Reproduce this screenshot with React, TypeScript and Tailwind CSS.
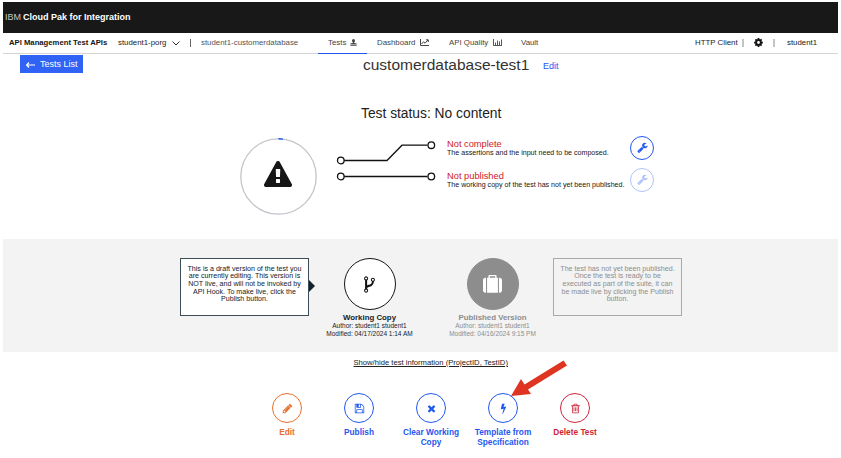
import type { ReactNode } from "react";

const paths = {
  warning:
    "M1024 1375v-190q0-14-9.5-23.5t-22.5-9.5h-192q-13 0-22.5 9.5t-9.5 23.5v190q0 14 9.5 23.5t22.5 9.5h192q13 0 22.5-9.5t9.5-23.5zm-2-374l18-459q0-12-10-19-13-11-24-11h-220q-11 0-24 11-10 7-10 21l17 457q0 10 10 16.5t24 6.5h185q14 0 23.5-6.5t10.5-16.5zm-14-934l768 1408q35 63-2 126-17 29-46.5 46t-63.5 17h-1536q-34 0-63.5-17t-46.5-46q-37-63-2-126l768-1408q17-31 47-49t65-18 65 18 47 49z",
  wrench:
    "M448 1472q0-26-19-45t-45-19-45 19-19 45 19 45 45 19 45-19 19-45zm644-420l-682 682q-37 37-90 37-52 0-91-37l-106-108q-38-36-38-90 0-53 38-91l681-681q39 98 114.5 173.5t173.5 114.5zm634-435q0 39-23 106-47 134-164.5 217.5t-258.5 83.5q-185 0-316.5-131.5t-131.5-316.5 131.5-316.5 316.5-131.5q58 0 121.5 16.5t107.5 46.5q16 11 16 28t-16 28l-293 169v224l193 107q5-3 79-48.5t135.5-81 70.5-35.5q15 0 23.5 10t8.5 25z",
  fork: "M672 1472q0-40-28-68t-68-28-68 28-28 68 28 68 68 28 68-28 28-68zm0-1152q0-40-28-68t-68-28-68 28-28 68 28 68 68 28 68-28 28-68zm640 128q0-40-28-68t-68-28-68 28-28 68 28 68 68 28 68-28 28-68zm96 0q0 52-26 96.5t-70 69.5q-2 287-226 414-67 38-203 81-128 40-169.5 71t-41.5 100v26q44 25 70 69.5t26 96.5q0 80-56 136t-136 56-136-56-56-136q0-52 26-96.5t70-69.5v-820q-44-25-70-69.5t-26-96.5q0-80 56-136t136-56 136 56 56 136q0 52-26 96.5t-70 69.5v497q54-26 154-57 55-17 87.5-29.5t70.5-31 59-39.5 40.5-51 28-69.5 8.5-91.5q-44-25-70-69.5t-26-96.5q0-80 56-136t136-56 136 56 56 136z",
  suitcase:
    "M640 256h512v-128h-512v128zm-352 0v1408h-64q-92 0-158-66t-66-158v-960q0-92 66-158t158-66h64zm1120 0v1408h-1024v-1408h128v-160q0-40 28-68t68-28h576q40 0 68 28t28 68v160h128zm384 224v960q0 92-66 158t-158 66h-64v-1408h64q92 0 158 66t66 158z",
  pencil:
    "M491 1536l91-91-235-235-91 91v107h128v128h107zm523-928q0-22-22-22-10 0-17 7l-542 542q-7 7-7 17 0 22 22 22 10 0 17-7l542-542q7-7 7-17zm-54-192l416 416-832 832h-416v-416zm683 96q0 53-37 90l-166 166-416-416 166-165q36-38 90-38 53 0 91 38l235 234q37 39 37 91z",
  floppy:
    "M512 1536h768v-384h-768v384zm896 0h128v-896q0-14-10-38.5t-20-34.5l-281-281q-10-10-34-20t-39-10v416q0 40-28 68t-68 28h-576q-40 0-68-28t-28-68v-416h-128v1280h128v-416q0-40 28-68t68-28h832q40 0 68 28t28 68v416zm-384-928v-320q0-13-9.5-22.5t-22.5-9.5h-192q-13 0-22.5 9.5t-9.5 22.5v320q0 13 9.5 22.5t22.5 9.5h192q13 0 22.5-9.5t9.5-22.5zm640 32v928q0 40-28 68t-68 28h-1344q-40 0-68-28t-28-68v-1344q0-40 28-68t68-28h928q40 0 88 20t76 48l280 280q28 28 48 76t20 88z",
  times:
    "M1490 1322q0 40-28 68l-136 136q-28 28-68 28t-68-28l-294-294-294 294q-28 28-68 28t-68-28l-136-136q-28-28-28-68t28-68l294-294-294-294q-28-28-28-68t28-68l136-136q28-28 68-28t68 28l294 294 294-294q28-28 68-28t68 28l136 136q28 28 28 68t-28 68l-294 294 294 294q28 28 28 68z",
  bolt: "M1333 566q18 20 7 44l-540 1157q-13 25-42 25-4 0-14-2-17-5-25.5-19t-4.5-30l197-808-406 101q-4 1-12 1-18 0-31-11-18-15-13-39l201-825q4-14 16-23t28-9h328q19 0 32 12.5t13 29.5q0 8-5 18l-171 463 396-98q8-2 12-2 19 0 34 15z",
  trash:
    "M704 736v576q0 14-9 23t-23 9h-64q-14 0-23-9t-9-23v-576q0-14 9-23t23-9h64q14 0 23 9t9 23zm256 0v576q0 14-9 23t-23 9h-64q-14 0-23-9t-9-23v-576q0-14 9-23t23-9h64q14 0 23 9t9 23zm256 0v576q0 14-9 23t-23 9h-64q-14 0-23-9t-9-23v-576q0-14 9-23t23-9h64q14 0 23 9t9 23zm128 724v-948h-896v948q0 22 7 40.5t14.5 27 10.5 8.5h832q3 0 10.5-8.5t14.5-27 7-40.5zm-672-1076h448l-48-117q-7-9-17-11h-317q-10 2-17 11zm928 32v64q0 14-9 23t-23 9h-96v948q0 83-47 143.5t-113 60.5h-832q-66 0-113-58.5t-47-141.5v-952h-96q-14 0-23-9t-9-23v-64q0-14 9-23t23-9h309l70-167q15-37 54-63t79-26h320q40 0 79 26t54 63l70 167h309q14 0 23 9t9 23z",
};

function Icon({ name, className }: { name: keyof typeof paths; className: string }) {
  return (
    <svg viewBox="0 0 1792 1792" fill="currentColor" className={className}>
      <path d={paths[name]} />
    </svg>
  );
}

function TopNav() {
  return (
    <nav className="flex h-[21px] items-stretch border-b border-[#d5d5d5] text-[7.850px] leading-[19px] text-[#222] whitespace-nowrap">
      <div className="ml-[6px] w-[109px] text-[7.700px] font-bold text-[#161616]">API Management Test APIs</div>
      <div className="w-[54px]">student1-porg</div>
      <svg viewBox="0 0 8 5" className="mt-[8px] h-[5px] w-[8px]" fill="none" stroke="#333">
        <path d="M0.500 0.500L4 4L7.500 0.500" />
      </svg>
      <div className="mt-[6px] mr-[10px] ml-[10px] h-[8px] w-px bg-[#666]" />
      <div className="w-[117px] text-[#555]">student1-customerdatabase</div>
      <div className="-mb-px flex w-[49px] border-b border-[#1f57f0] pl-[10px] text-[#444]">
        Tests
        <svg viewBox="0 0 8 8" className="mt-[6px] ml-[4px] h-[7px] w-[7px]" fill="#444">
          <path d="M2.300 1.900a1.700 1.800 0 0 1 3.400 0c0 .8-.4 1.300-.9 1.800v.8L7.600 5.200V6.300H.4V5.200L3.200 4.500V3.700C2.700 3.200 2.300 2.700 2.300 1.900zM.4 7h7.200v1H.4z" />
        </svg>
      </div>
      <div className="ml-[10px] flex w-[72px] text-[#444]">
        Dashboard
        <svg viewBox="0 0 9 8" className="mt-[6px] ml-[5px] h-[8px] w-[9px]" fill="none" stroke="#444">
          <path d="M.5 0V6.500H9M1.500 5L3.500 2.800L5 4.200L8 1M6 .8h2.300v2.200" />
        </svg>
      </div>
      <div className="flex w-[72px] text-[#444]">
        API Quality
        <svg viewBox="0 0 9 8" className="mt-[6px] ml-[5px] h-[8px] w-[9px]" fill="none" stroke="#444">
          <path d="M.5 0V6.500H9M2.500 3.500v2.500M4.500 1.500V6M6.500 2.500v3.500M8.500 .5v5.500" strokeWidth=".9" />
        </svg>
      </div>
      <div className="w-[174px] text-[#444]">Vault</div>
      <div className="w-[47px]">HTTP Client</div>
      <div className="mt-[6px] h-[8px] w-[2px] bg-[#c4c4c4]" />
      <svg viewBox="-9 -9 18 18" className="mt-[5px] ml-[10px] h-[9px] w-[9px]" stroke="#161616" fill="none">
        <circle r="4.800" strokeWidth="4" />
        <path d="M0 -8.800V-5M0 8.800V5M-8.800 0H-5M8.800 0H5M-6.200 -6.200L-4 -4M6.200 6.200L4 4M-6.200 6.200L-4 4M6.200 -6.200L4 -4" strokeWidth="3.500" />
      </svg>
      <div className="mt-[6px] mr-[12px] ml-[10px] h-[8px] w-[2px] bg-[#c4c4c4]" />
      <div>student1</div>
    </nav>
  );
}

function Problem({ title, text }: { title: string; text: string }) {
  return (
    <div className="h-[32px] whitespace-nowrap">
      <div className="text-[9.300px] leading-[10px] text-[#d0191f]">{title}</div>
      <div className="text-[7.100px] leading-[8px] text-[#161616]">{text}</div>
    </div>
  );
}

function StatusDiagram() {
  return (
    <div className="ml-[237px] flex h-[103px]">
      <div className="relative mt-[2px] flex h-[77px] w-[77px] items-center justify-center">
        <svg viewBox="0 0 77 77" className="absolute inset-0" fill="none">
          <circle cx="38.500" cy="38.500" r="37.700" stroke="#c1c5ca" strokeWidth="1.300" />
          <path d="M38.500 .8A37.700 37.700 0 0 1 43 1.100" stroke="#1f57f0" strokeWidth="1.400" />
        </svg>
        <Icon name="warning" className="-mt-[4px] -ml-px h-[28px] w-[28px] text-[#161616]" />
      </div>
      <svg viewBox="0 0 100 48" className="mt-[2px] ml-[19px] h-[48px] w-[100px]" fill="none" stroke="#111" strokeWidth="1.300">
        <path d="M8 22.500H51L66 7.200H91.500M8 38.500H91.500" />
        <g fill="#fff">
          <circle cx="4.800" cy="22.500" r="3.300" />
          <circle cx="4.800" cy="38.500" r="3.300" />
          <circle cx="95.300" cy="7.200" r="3.300" />
          <circle cx="95.300" cy="38.500" r="3.300" />
        </g>
      </svg>
      <div className="mt-[3px] ml-[11px] w-[183px]">
        <Problem title="Not complete" text="The assertions and the input need to be composed." />
        <Problem title="Not published" text="The working copy of the test has not yet been published." />
      </div>
      <div className="flex flex-col gap-[8px] text-[#1f57f0]">
        <button className="flex size-[24px] items-center justify-center rounded-full border border-current">
          <Icon name="wrench" className="-mt-px size-[11px]" />
        </button>
        <button className="flex size-[24px] items-center justify-center rounded-full border border-current opacity-35">
          <Icon name="wrench" className="-mt-px size-[11px]" />
        </button>
      </div>
    </div>
  );
}

function Version({ icon, title, modified, published }: { icon: ReactNode; title: string; modified: string; published?: boolean }) {
  return (
    <div className={`flex w-[123px] flex-col items-center whitespace-nowrap ${published ? "text-[#8d8d8d]" : "text-[#14222b]"}`}>
      <div className={`mb-[3px] flex size-[52px] items-center justify-center rounded-full border ${published ? "border-[#8d8d8d] bg-[#8d8d8d] text-white" : "border-[#161616] bg-white text-[#111]"}`}>
        {icon}
      </div>
      <div className="text-[7.850px] leading-[9px] font-bold">{title}</div>
      <div className="text-[6.500px] leading-[8px]">Author: student1 student1</div>
      <div className="text-[6.500px] leading-[8px]">Modified: {modified}</div>
    </div>
  );
}

function Action({ icon, lines, color }: { icon: keyof typeof paths; lines: string[]; color: string }) {
  return (
    <div className={`flex w-[72px] flex-col items-center text-[8.300px] font-bold whitespace-nowrap ${color}`}>
      <button className="mb-[4px] flex size-[30px] items-center justify-center rounded-full border border-current">
        <Icon name={icon} className="size-[11px]" />
      </button>
      {lines.map((line) => (
        <div key={line} className="leading-[10px]">{line}</div>
      ))}
    </div>
  );
}

export default function App() {
  return (
    <div className="relative h-[458px] w-[841px] overflow-hidden bg-white pt-[2px] pr-[3px] pl-[3px] font-['Liberation_Sans',Arial,sans-serif]">
      <header className="flex h-[31px] bg-[#181818] pl-[2px] text-[9px] leading-[31px] text-white">
        <span className="w-[18px] text-[#c8c8c8]">IBM</span>
        <b>Cloud Pak for Integration</b>
      </header>
      <TopNav />
      <div className="flex h-[52px] items-start whitespace-nowrap">
        <button className="mt-[1px] ml-[17px] flex h-[18px] w-[63px] items-center bg-[#2f62f5] pt-px pl-[6px] text-[9px] text-white">
          <svg viewBox="0 0 9 6" className="mr-[5px] h-[6px] w-[9px]" fill="none" stroke="white" strokeWidth="1.200">
            <path d="M0 3H9M3 .5L.7 3L3 5.500" />
          </svg>
          Tests List
        </button>
        <h1 className="ml-[280px] w-[180px] text-[15.500px] leading-[21px] text-[#333]">customerdatabase-test1</h1>
        <a className="mt-[7px] text-[9px] leading-[10px] text-[#1f57f0]">Edit</a>
      </div>
      <h2 className="ml-[358px] h-[30px] text-[13.800px] leading-[16px] whitespace-nowrap text-[#222]">Test status: No content</h2>
      <StatusDiagram />
      <section className="flex h-[113px] bg-[#f3f3f3] pt-[19px] pl-[177px]">
        <div className="relative h-[58px] w-[129px] border border-[#3c4d56] bg-white pt-[6.600px] text-center text-[7.100px] leading-[7.700px] whitespace-nowrap text-[#14222b]">
          This is a draft version of the test you
          <br />are currently editing. This version is
          <br />NOT live, and will not be invoked by
          <br />API Hook. To make live, click the
          <br />Publish button.
          <div className="absolute top-[21px] -right-[7px] border-y-[6px] border-l-[6px] border-y-transparent border-l-[#14222b]" />
        </div>
        <div className="-ml-px">
          <Version icon={<Icon name="fork" className="size-[19px]" />} title="Working Copy" modified="04/17/2024 1:14 AM" />
        </div>
        <div className="-mr-px">
          <Version published icon={<Icon name="suitcase" className="size-[19px]" />} title="Published Version" modified="04/16/2024 9:15 PM" />
        </div>
        <div className="h-[58px] w-[129px] border border-[#a6aaac] pt-[6.600px] text-center text-[7.100px] leading-[7.700px] whitespace-nowrap text-[#8d8d8d]">
          The test has not yet been published.
          <br />Once the test is ready to be
          <br />executed as part of the suite, it can
          <br />be made live by clicking the Publish
          <br />button.
        </div>
      </section>
      <div className="h-[41px] pt-[6px] pl-[350.500px] text-[7.650px] leading-[10px] whitespace-nowrap text-[#222]">
        <a className="underline">Show/hide test information (ProjectID, TestID)</a>
      </div>
      <div className="ml-[248px] flex">
        <Action icon="pencil" lines={["Edit"]} color="text-[#e5702f]" />
        <Action icon="floppy" lines={["Publish"]} color="text-[#1f57f0]" />
        <Action icon="times" lines={["Clear Working", "Copy"]} color="text-[#1f57f0]" />
        <Action icon="bolt" lines={["Template from", "Specification"]} color="text-[#1f57f0]" />
        <Action icon="trash" lines={["Delete Test"]} color="text-[#cf2436]" />
      </div>
      <svg viewBox="0 0 56 37" className="absolute top-[360px] left-[511px] h-[37px] w-[56px]" fill="#de3421">
        <path d="M0 36L10 19L13.500 24.500L52.500 .5L56 5.500L17 29.500L20 34Z" />
      </svg>
    </div>
  );
}
